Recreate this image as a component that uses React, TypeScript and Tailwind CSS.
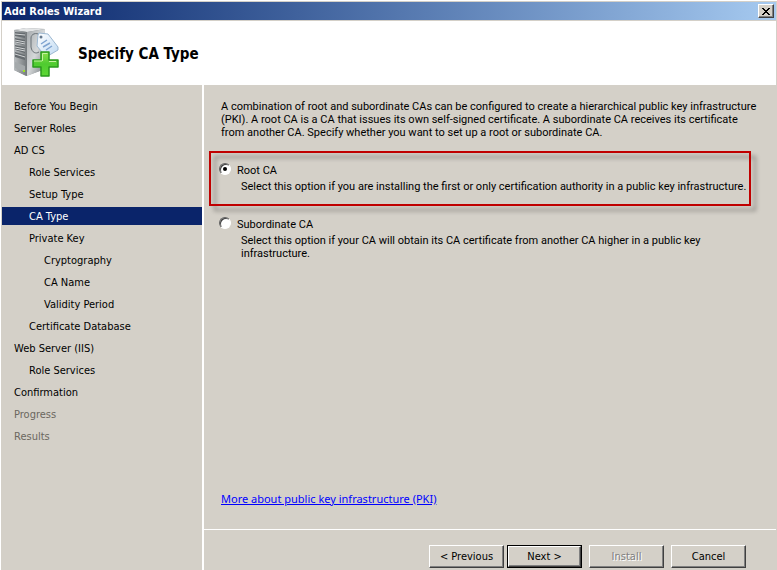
import { useState } from "react";
import type { ReactNode } from "react";

type Step = { label: string; level: 0 | 1 | 2; state?: "active" | "disabled" };

const steps: Step[] = [
  { label: "Before You Begin", level: 0 },
  { label: "Server Roles", level: 0 },
  { label: "AD CS", level: 0 },
  { label: "Role Services", level: 1 },
  { label: "Setup Type", level: 1 },
  { label: "CA Type", level: 1, state: "active" },
  { label: "Private Key", level: 1 },
  { label: "Cryptography", level: 2 },
  { label: "CA Name", level: 2 },
  { label: "Validity Period", level: 2 },
  { label: "Certificate Database", level: 1 },
  { label: "Web Server (IIS)", level: 0 },
  { label: "Role Services", level: 1 },
  { label: "Confirmation", level: 0 },
  { label: "Progress", level: 0, state: "disabled" },
  { label: "Results", level: 0, state: "disabled" },
];

const indent = ["pl-3", "pl-[27px]", "pl-[42px]"];

function ServerIcon() {
  return (
    <svg width="48" height="52" viewBox="0 0 48 52" aria-hidden="true">
      <defs>
        <linearGradient id="front" x1="0" y1="0" x2="1" y2="0">
          <stop offset="0" stopColor="#b9bdbf" />
          <stop offset="1" stopColor="#74797c" />
        </linearGradient>
        <linearGradient id="side" x1="0" y1="0" x2="1" y2="1">
          <stop offset="0" stopColor="#a5aaad" />
          <stop offset="0.5" stopColor="#d5d8d9" />
          <stop offset="1" stopColor="#70777a" />
        </linearGradient>
        <linearGradient id="plus" x1="0" y1="0" x2="0" y2="1">
          <stop offset="0" stopColor="#8ae04a" />
          <stop offset="0.5" stopColor="#4fcb30" />
          <stop offset="1" stopColor="#5ed834" />
        </linearGradient>
        <linearGradient id="tag" x1="0" y1="0" x2="1" y2="1">
          <stop offset="0" stopColor="#ffffff" />
          <stop offset="1" stopColor="#bed9f2" />
        </linearGradient>
      </defs>
      <path d="M0 3L12 1L31 2L31 42L12 49L0 43Z" fill="#8a8f92" />
      <path d="M0 3L12 1L31 2L13 5Z" fill="#e3e5e6" />
      <path d="M0 3L13 5V49L0 43Z" fill="url(#front)" />
      <path d="M13 5L31 2V42L13 49Z" fill="url(#side)" />
      <path d="M1 5L11 6V11L1 9ZM1 11L11 13V18L1 16ZM1 18L11 20V26L1 23ZM1 25L11 28V33L1 30Z" fill="#666c70" />
      <path d="M1 7L11 8M1 13L11 15M1 15L11 17M1 20L11 22M1 22L11 24M1 27L11 30" stroke="#d0d3d4" strokeWidth="1" />
      <path d="M1 35L11 39V45L1 41Z" fill="#a4a9ab" />
      <path d="M9 43h2v2h-2z" fill="#9be51f" />
      <path d="M26 8C22 5 17 7 17 11V20C18 26 22 27 25 25" fill="none" stroke="#697176" strokeWidth="1" />
      <path d="M24 8L25 6L34 7L44 20V23L32 30L23 19Z" fill="url(#tag)" stroke="#9db8d1" strokeWidth="1" />
      <circle cx="27" cy="10" r="1.5" fill="#64788d" />
      <path d="M27 17L33 13M29 20L36 16M32 23L38 19" stroke="#7ea3d0" strokeWidth="1.5" />
      <path d="M26 26h8v8h9v7h-9v9h-8v-9h-8v-7h8z" fill="url(#plus)" stroke="#2a9a1c" strokeWidth="1.5" strokeLinejoin="round" transform="translate(1 -1)" />
      <path d="M28 34H20M28.500 34v-7.500h5M35 34.500h7" fill="none" stroke="#c4f3a0" strokeWidth="1" />
    </svg>
  );
}

type WizardButtonProps = { children: ReactNode; primary?: boolean; disabled?: boolean };

function WizardButton({ children, primary, disabled }: WizardButtonProps) {
  const edge = primary ? "border border-black" : "";
  const text = disabled ? "text-[#808080] [text-shadow:1px_1px_0_#ffffff]" : "text-black";
  return (
    <button type="button" disabled={disabled} className={`h-[23px] w-[75px] ${edge} ${text}`}>
      <span className="flex h-full w-full items-center justify-center border border-t-white border-r-[#404040] border-b-[#404040] border-l-white shadow-[inset_-1px_-1px_0_#808080]">
        {children}
      </span>
    </button>
  );
}

type OptionProps = {
  id: string;
  label: string;
  description: string;
  checked: boolean;
  onSelect: () => void;
};

function Option({ id, label, description, checked, onSelect }: OptionProps) {
  return (
    <div className="flex items-start gap-1.5">
      <input
        id={id}
        type="radio"
        name="ca-type"
        checked={checked}
        onChange={onSelect}
        aria-describedby={`${id}-description`}
        className="grid h-3 w-3 shrink-0 appearance-none place-items-center rounded-full border border-t-[#606060] border-r-white border-b-white border-l-[#606060] bg-white shadow-[inset_1px_1px_0_#404040] before:h-1 before:w-1 before:rounded-full checked:before:bg-black"
      />
      <div className="pt-px">
        <label htmlFor={id} className="block">
          {label}
        </label>
        <p id={`${id}-description`} className="max-w-[510px] pt-[3px] pl-1">
          {description}
        </p>
      </div>
    </div>
  );
}

export default function App() {
  const [type, setType] = useState("root");
  return (
    <div className="flex min-h-screen flex-col border-t border-l border-white bg-[#d4d0c8] font-['DejaVu_Sans_Condensed','DejaVu_Sans',sans-serif] text-[11px] leading-[13px] text-black">
      <div className="flex grow flex-col border-t border-r border-l border-[#d4d0c8]">
        <header>
          <div className="flex h-[18px] items-center justify-between bg-linear-to-r from-[#0a246a] to-[#a6caf0] pr-0.5 pl-0.5">
            <h1 className="font-bold text-white">Add Roles Wizard</h1>
            <button
              type="button"
              aria-label="Close"
              className="flex h-3.5 w-4 items-center justify-center border border-t-white border-r-[#404040] border-b-[#404040] border-l-white bg-[#d4d0c8] shadow-[inset_-1px_-1px_0_#808080]"
            >
              <svg width="8" height="7" viewBox="0 0 8 7" shapeRendering="crispEdges" aria-hidden="true">
                <path d="M0 0h2v1h1v1h2v-1h1v-1h2v1h-1v1h-1v1h-1v1h1v1h1v1h1v1h-2v-1h-1v-1h-2v1h-1v1h-2v-1h1v-1h1v-1h1v-1h-1v-1h-1v-1h-1z" fill="#000000" />
              </svg>
            </button>
          </div>
          <div className="mt-px flex h-16 items-center gap-4 bg-white pl-3">
            <ServerIcon />
            <h2 className="pt-0.5 text-[15px] leading-5 font-bold">Specify CA Type</h2>
          </div>
        </header>
        <div className="flex grow">
          <nav aria-label="Wizard steps" className="w-[202px] shrink-0 border-r-2 border-white pt-2">
            <ul>
              {steps.map((step, i) => (
                <li
                  key={i}
                  aria-current={step.state === "active" ? "step" : undefined}
                  className={`my-1 flex h-[18px] items-center ${indent[step.level]} ${
                    step.state === "active" ? "bg-[#0a246a] text-white" : ""
                  } ${step.state === "disabled" ? "text-[#6b675f]" : ""}`}
                >
                  {step.label}
                </li>
              ))}
            </ul>
          </nav>
          <main className="flex grow flex-col">
            <section className="flex grow flex-col pt-[15px] pr-[25px] pl-[17px] font-[Roboto,sans-serif]">
              <p className="-mr-1.5">
                A combination of root and subordinate CAs can be configured to create a hierarchical public key infrastructure
                (PKI). A root CA is a CA that issues its own self-signed certificate. A subordinate CA receives its certificate
                from another CA. Specify whether you want to set up a root or subordinate CA.
              </p>
              <div className="relative -ml-3 mt-3 h-[55px] pt-3 pl-2.5">
                <div className="pointer-events-none absolute inset-0 border-2 border-[#c00000] drop-shadow-[5px_5px_2px_rgba(0,0,0,0.35)]" />
                <Option
                  id="root"
                  label="Root CA"
                  description="Select this option if you are installing the first or only certification authority in a public key infrastructure."
                  checked={type === "root"}
                  onSelect={() => setType("root")}
                />
              </div>
              <div className="-ml-0.5 mt-[11px]">
                <Option
                  id="subordinate"
                  label="Subordinate CA"
                  description="Select this option if your CA will obtain its CA certificate from another CA higher in a public key infrastructure."
                  checked={type === "subordinate"}
                  onSelect={() => setType("subordinate")}
                />
              </div>
              <a href="#pki" className="mt-auto mb-6 self-start font-['Noto_Sans',sans-serif] text-[#0000ff] underline">
                More about public key infrastructure (PKI)
              </a>
            </section>
            <footer className="flex justify-end gap-[7px] border-t border-white pt-[15px] pr-[30px] pb-0.5">
              <div className="flex gap-[3px]">
                <WizardButton>&lt; Previous</WizardButton>
                <WizardButton primary>Next &gt;</WizardButton>
              </div>
              <WizardButton disabled>Install</WizardButton>
              <WizardButton>Cancel</WizardButton>
            </footer>
          </main>
        </div>
      </div>
    </div>
  );
}
